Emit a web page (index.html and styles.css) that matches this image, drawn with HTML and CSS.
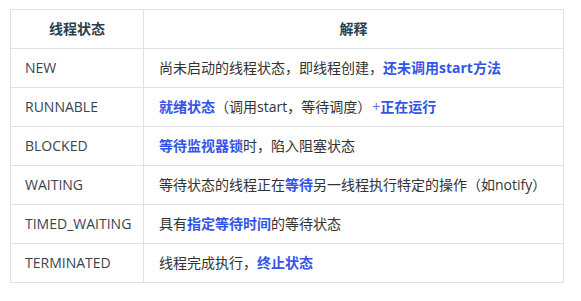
FILE: index.html
```html
<!DOCTYPE html>
<html lang="zh">
<head>
<meta charset="utf-8">
<link rel="stylesheet" href="styles.css">
</head>
<body>
<table class="tbl">
  <colgroup><col class="c1"><col class="c2"></colgroup>
  <thead>
    <tr><th>线程状态</th><th>解释</th></tr>
  </thead>
  <tbody>
    <tr><td>NEW</td><td>尚未启动的线程状态，即线程创建，<b class="hl">还未调用start方法</b></td></tr>
    <tr><td>RUNNABLE</td><td><b class="hl">就绪状态</b>（调用start，等待调度）<span class="plus">+</span><b class="hl">正在运行</b></td></tr>
    <tr><td>BLOCKED</td><td><b class="hl">等待监视器锁</b>时，陷入阻塞状态</td></tr>
    <tr><td>WAITING</td><td>等待状态的线程正在<b class="hl">等待</b>另一线程执行特定的操作（如notify）</td></tr>
    <tr><td>TIMED_WAITING</td><td>具有<b class="hl">指定等待时间</b>的等待状态</td></tr>
    <tr><td>TERMINATED</td><td>线程完成执行，<b class="hl">终止状态</b></td></tr>
  </tbody>
</table>
</body>
</html>
```
FILE: styles.css
```css
html, body { margin: 0; background: #fff; }
body {
  padding: 9px 0 0 10px;
  font-family: "Open Sans", "Noto Sans CJK SC", sans-serif;
  font-size: 14px;
  color: #333;
}
.tbl {
  border-collapse: collapse;
  width: 554px;
  table-layout: fixed;
}
.c1 { width: 133px; }
.tbl th, .tbl td {
  border: 1px solid #dfe2e5;
  height: 39px;
  padding: 0 14px;
  box-sizing: border-box;
  vertical-align: middle;
  line-height: 20px;
  white-space: nowrap;
}
.tbl th {
  text-align: center;
  font-weight: bold;
  color: #2c3e50;
}
.tbl td:first-child { color: #3a4350; }
.tbl td + td { padding-left: 15px; }
.hl { color: #3454e8; font-weight: bold; }
.plus { color: #5a6fd0; padding-left: 1px; }
```
